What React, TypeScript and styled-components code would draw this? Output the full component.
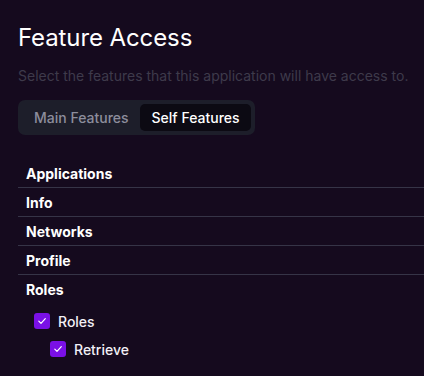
import React, { useState } from 'react';
import styled, { createGlobalStyle } from 'styled-components';

const GlobalStyle = createGlobalStyle`
  html, body {
    margin: 0;
    padding: 0;
    background: #150a1e;
  }
  body {
    font-family: Inter, "Noto Sans", sans-serif;
    color: #ffffff;
    -webkit-font-smoothing: antialiased;
  }
`;

const Page = styled.div`
  min-height: 376px;
  padding: 22px 0 0 18px;
  box-sizing: border-box;
  overflow: hidden;
`;

const Title = styled.h1`
  margin: 0;
  font-size: 24px;
  line-height: 32px;
  font-weight: 400;
  color: #ffffff;
  letter-spacing: -0.1px;
`;

const Subtitle = styled.p`
  margin: 12px 0 0;
  font-size: 14px;
  line-height: 20px;
  color: #3e3a4b;
  white-space: nowrap;
`;

const Tabs = styled.div`
  display: inline-flex;
  margin-top: 14px;
  padding: 4px;
  border-radius: 7px;
  background: #1d1e2a;
`;

const Tab = styled.button<{ $active: boolean }>`
  border: none;
  margin: 0;
  padding: 0 11px 0 12px;
  height: 27px;
  border-radius: 5px;
  font-family: inherit;
  font-size: 14px;
  font-weight: 500;
  cursor: pointer;
  background: ${(p) => (p.$active ? '#0c0a13' : 'transparent')};
  color: ${(p) => (p.$active ? '#ffffff' : '#8c8d9c')};
`;

const List = styled.div`
  margin-top: 24px;
  margin-right: -20px;
`;

const Row = styled.div`
  height: 28px;
  padding-left: 8px;
  display: flex;
  align-items: center;
  font-size: 14px;
  font-weight: 700;
  color: #ffffff;
  & + & {
    border-top: 1px solid #363447;
  }
`;

const Children = styled.div`
  padding-top: 4px;
`;

const CheckRow = styled.label<{ $depth: number }>`
  height: 28px;
  display: flex;
  align-items: center;
  gap: 8px;
  padding-left: ${(p) => 16 + p.$depth * 16}px;
  font-size: 14px;
  font-weight: 500;
  color: #f2f0f6;
  cursor: pointer;
`;

const Box = styled.span`
  width: 16px;
  height: 16px;
  border-radius: 3px;
  background: #7a10e6;
  display: flex;
  align-items: center;
  justify-content: center;
  flex-shrink: 0;
`;

const Check = () => (
  <svg width="10" height="10" viewBox="0 0 10 10" fill="none">
    <path d="M1.8 5.2 L4 7.4 L8.3 2.6" stroke="#ffffff" strokeWidth="1.2" strokeLinecap="round" strokeLinejoin="round" />
  </svg>
);

const features = ['Applications', 'Info', 'Networks', 'Profile', 'Roles'];

export default function App() {
  const [tab, setTab] = useState('self');
  return (
    <>
      <GlobalStyle />
      <Page>
        <Title>Feature Access</Title>
        <Subtitle>Select the features that this application will have access to.</Subtitle>
        <Tabs>
          <Tab $active={tab === 'main'} onClick={() => setTab('main')}>Main Features</Tab>
          <Tab $active={tab === 'self'} onClick={() => setTab('self')}>Self Features</Tab>
        </Tabs>
        <List>
          {features.map((f) => (
            <Row key={f}>{f}</Row>
          ))}
        </List>
        <Children>
          <CheckRow $depth={0}>
            <Box><Check /></Box>
            Roles
          </CheckRow>
          <CheckRow $depth={1}>
            <Box><Check /></Box>
            Retrieve
          </CheckRow>
        </Children>
      </Page>
    </>
  );
}
